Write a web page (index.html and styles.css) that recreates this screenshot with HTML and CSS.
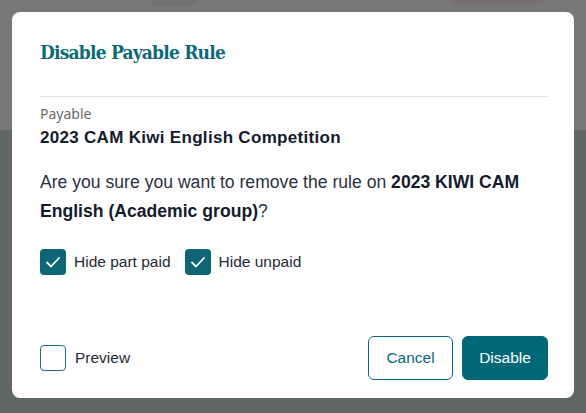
FILE: index.html
```html
<!DOCTYPE html>
<html>
<head>
<meta charset="utf-8">
<link rel="stylesheet" href="styles.css">
</head>
<body>
<div class="backdrop">
  <span class="ghost ghost-text"></span>
  <span class="ghost ghost-pink"></span>
</div>
<div class="modal">
  <div class="modal-header">
    <h2 class="title">Disable Payable Rule</h2>
  </div>
  <div class="modal-body">
    <div class="label">Payable</div>
    <div class="payable-name">2023 CAM Kiwi English Competition</div>
    <p class="question">Are you sure you want to remove the rule on <b>2023 KIWI CAM</b> <b>English (Academic group)</b>?</p>
    <div class="options">
      <label class="check">
        <span class="box checked"><svg viewBox="0 0 26 26" width="26" height="26"><path d="M7 13.5 L11 17.5 L19 9" fill="none" stroke="#fff" stroke-width="1.8" stroke-linecap="round" stroke-linejoin="round"/></svg></span>
        <span class="check-text">Hide part paid</span>
      </label>
      <label class="check">
        <span class="box checked"><svg viewBox="0 0 26 26" width="26" height="26"><path d="M7 13.5 L11 17.5 L19 9" fill="none" stroke="#fff" stroke-width="1.8" stroke-linecap="round" stroke-linejoin="round"/></svg></span>
        <span class="check-text">Hide unpaid</span>
      </label>
    </div>
  </div>
  <div class="modal-footer">
    <label class="check preview">
      <span class="box empty"></span>
      <span class="check-text">Preview</span>
    </label>
    <div class="actions">
      <button class="btn btn-outline">Cancel</button>
      <button class="btn btn-primary">Disable</button>
    </div>
  </div>
</div>
</body>
</html>
```
FILE: styles.css
```css
html, body {
  margin: 0;
  padding: 0;
}
html {
  background: #5f6866;
}
body {
  width: 586px;
  height: 413px;
  overflow: hidden;
  font-family: "Liberation Sans", Arial, sans-serif;
  position: relative;
}
.backdrop {
  position: absolute;
  inset: 0;
  background: linear-gradient(to bottom, #777777 0px, #777777 130px, #5f6866 130px, #5f6866 413px);
}
.ghost {
  position: absolute;
  top: 0;
  height: 5px;
  border-radius: 0 0 3px 3px;
  filter: blur(1px);
}
.ghost-text {
  left: 152px;
  width: 44px;
  background: #707070;
}
.ghost-pink {
  left: 450px;
  width: 93px;
  background: #7a6f71;
}
.modal {
  position: relative;
  margin: 12px 0 0 12px;
  width: 562px;
  height: 386px;
  box-sizing: border-box;
  background: #ffffff;
  border-radius: 8px;
  padding: 0 26px 0 28px;
  display: flex;
  flex-direction: column;
}
.modal-header {
  height: 85px;
  border-bottom: 1px solid #e3e7ef;
  display: flex;
  align-items: center;
  box-sizing: border-box;
  padding-bottom: 4px;
}
.title {
  margin: 0;
  font-family: "DejaVu Serif", serif;
  font-stretch: condensed;
  font-weight: 700;
  font-size: 19px;
  color: #0b6a79;
  letter-spacing: -0.8px;
}
.modal-body {
  padding-top: 7px;
  flex: 1;
}
.label {
  font-family: "Noto Sans", sans-serif;
  font-size: 14px;
  color: #6b6b6b;
  line-height: 20px;
}
.payable-name {
  font-size: 17px;
  letter-spacing: 0.3px;
  font-weight: 700;
  color: #141b2d;
  line-height: 22px;
  margin-top: 3px;
}
.question {
  margin: 19px 0 0;
  font-size: 17.6px;
  line-height: 29px;
  color: #2b3142;
}
.question b {
  color: #141b2d;
}
.options {
  display: flex;
  gap: 14px;
  margin-top: 23px;
}
.check {
  display: flex;
  align-items: center;
  gap: 8px;
}
.box {
  width: 26px;
  height: 26px;
  box-sizing: border-box;
  border-radius: 4px;
  display: block;
}
.box svg {
  display: block;
}
.box.checked {
  background: #0d6676;
}
.box.empty {
  border: 1.5px solid #1d6a9c;
  background: #fff;
}
.check-text {
  font-size: 15.5px;
  color: #252a37;
}
.preview {
  gap: 9px;
}
.modal-footer {
  display: flex;
  align-items: center;
  justify-content: space-between;
  padding-bottom: 18px;
}
.actions {
  display: flex;
  gap: 9px;
}
.btn {
  height: 44px;
  box-sizing: border-box;
  border-radius: 6px;
  font-family: "Liberation Sans", Arial, sans-serif;
  font-size: 15.5px;
  padding: 0;
  cursor: pointer;
}
.btn-outline {
  width: 85px;
  background: #fff;
  border: 1px solid #0b6878;
  color: #0b6878;
}
.btn-primary {
  width: 86px;
  background: #026878;
  border: 1px solid #026878;
  color: #ffffff;
}
```
